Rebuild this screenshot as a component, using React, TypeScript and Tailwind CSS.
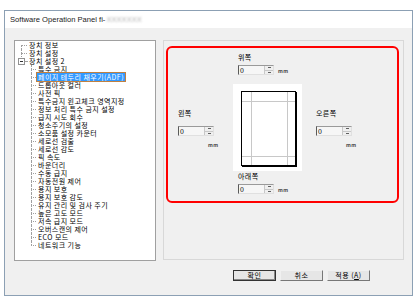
import React from "react";

const roots = ["장치 정보", "장치 설정", "장치 설정 2"];
const kids = [
  "특수 금지",
  "페이지 테두리 채우기(ADF)",
  "드롭아웃 컬러",
  "사전 픽",
  "특수금지 왼고체크 영역지정",
  "정보 처리 특수 금지 설정",
  "급지 시도 회수",
  "청소주기의 설정",
  "소모품 설정 카운터",
  "세로선 검출",
  "세로선 감도",
  "픽 속도",
  "바운더리",
  "수동 급지",
  "자동전원 제어",
  "용지 보호",
  "용지 보호 감도",
  "유지 관리 및 검사 주기",
  "높은 고도 모드",
  "저속 급지 모드",
  "오버스캔의 제어",
  "ECO 모드",
  "네트워크 기능",
];

const dot = "border-dotted border-[#a0a0a0]";

function Branch({ up, down, w }: { up: boolean; down: boolean; w: string }) {
  return (
    <div className={`flex h-full flex-col ${w}`}>
      <div className={`h-[4px] ${up ? `border-l ${dot}` : ""}`} />
      <div className={`h-[4px] border-t ${dot} ${down ? "border-l" : ""}`} />
    </div>
  );
}

function Tree() {
  return (
    <div className="h-[221px] w-[142px] border border-[#a0a0a0] bg-white pl-[6px] text-[7px] leading-[8px] tracking-[0.45px] text-black">
      {roots.map((r, i) => (
        <div key={r} className="flex h-[8px] items-center">
          {i < 2 ? (
            <Branch up={i > 0} down w="w-[6px]" />
          ) : (
            <div className="flex h-full w-[6px] items-center">
              <div className="-ml-[3px] flex h-[7px] w-[7px] shrink-0 items-center justify-center border border-[#919191] bg-white">
                <div className="h-px w-[3px] bg-[#333]" />
              </div>
              <div className={`h-0 flex-1 border-t ${dot}`} />
            </div>
          )}
          <span className="ml-[2px] inline-block h-[8px] whitespace-nowrap leading-[8px]">{r}</span>
        </div>
      ))}
      {kids.map((k, i) => (
        <div key={k} className="flex h-[8px] items-center">
          <div className="ml-[10px]" />
          <Branch up down={i < kids.length - 1} w="w-[5px]" />
          <span
            className={`ml-[1px] inline-block h-[8px] whitespace-nowrap px-[1px] leading-[8px] ${
              i === 1 ? "bg-[#3399ff] text-white outline outline-[#c08040]" : ""
            }`}
          >
            {k}
          </span>
        </div>
      ))}
    </div>
  );
}

function Spin() {
  return (
    <div className="flex h-[10px] w-[36px] border border-[#e0e0e0] border-l-[#5a5a5a] border-t-[#9a9a9a] bg-[#f6f6f6]">
      <span className="flex-1 pl-[1px] text-[7px] leading-[8px] text-black">0</span>
      <div className="flex w-[9px] flex-col border-l border-[#c8c8c8] bg-[#efefef]">
        <div className="flex flex-1 items-center justify-center border-b border-[#c8c8c8]">
          <div className="h-px w-[3px] bg-[#606060]" />
        </div>
        <div className="flex flex-1 items-center justify-center">
          <div className="h-px w-[3px] bg-[#606060]" />
        </div>
      </div>
    </div>
  );
}

function Mm({ cls = "" }: { cls?: string }) {
  return <span className={`text-[5px] font-bold leading-[5px] text-[#444] ${cls}`}>mm</span>;
}

function Page() {
  return (
    <div className="h-[87px] w-[69px] bg-white">
      <svg width="69" height="87" viewBox="0 0 69 87">
        <rect x="8.5" y="7.5" width="54" height="74" fill="#fff" stroke="#000" strokeWidth="1" />
        <line x1="63.5" y1="8" x2="63.5" y2="83" stroke="#000" strokeWidth="1" />
        <line x1="9" y1="82.5" x2="64" y2="82.5" stroke="#000" strokeWidth="1" />
        <line x1="18.5" y1="8" x2="18.5" y2="81" stroke="#c8c8c8" strokeWidth="1" />
        <line x1="54.5" y1="8" x2="54.5" y2="81" stroke="#c8c8c8" strokeWidth="1" />
        <line x1="9" y1="17.5" x2="62" y2="17.5" stroke="#c8c8c8" strokeWidth="1" />
        <line x1="9" y1="72.5" x2="62" y2="72.5" stroke="#c8c8c8" strokeWidth="1" />
      </svg>
    </div>
  );
}

function Btn({ label, main }: { label: React.ReactNode; main?: boolean }) {
  return (
    <div
      className={`flex h-[11px] w-[43px] items-center justify-center border bg-[#e6e6e6] text-[7px] leading-[7px] tracking-[0.5px] text-black ${
        main ? "border-[#333] shadow-[inset_-1px_-1px_0_#888]" : "border-[#f0f0f0] border-b-[#777] border-r-[#777]"
      }`}
    >
      {label}
    </div>
  );
}

export default function App() {
  return (
    <div className="h-[308px] w-[417px] bg-white pl-[4px] pt-[10px] font-['Noto_Sans_CJK_KR',sans-serif]">
      <div className="flex h-[286px] w-[409px] flex-col border border-[#8ca0b4]">
        <div className="flex h-[17px] items-center bg-white pl-[5px] font-['Liberation_Sans','Noto_Sans_CJK_KR',sans-serif] text-[7.6px] text-[#222]">
          <span>Software Operation Panel fi-</span>
          <span className="ml-[1px] text-[#b0b0b0] blur-[1.2px]">XXXXXXX</span>
        </div>
        <div className="flex-1 bg-[#f0f0f0] pl-[9px] pr-[8px] pt-[12px]">
          <div className="flex h-[221px] gap-[7px]">
            <Tree />
            <div className="h-[220px] w-[241px] border border-[#d8d8d8] pl-[2px] pt-[5px]">
              <div className="flex h-[157px] w-[233px] flex-col rounded-[6px] border-2 border-[#ff0000] text-[7px] leading-[9px] tracking-[0.4px] text-black">
                <div className="ml-[70px] pt-[5px]">
                  <div className="h-[9px]">위쪽</div>
                  <div className="mt-[3px] flex items-end gap-[4px]">
                    <Spin />
                    <Mm cls="mb-[2px]" />
                  </div>
                </div>
                <div className="mt-[9px] flex">
                  <div className="ml-[10px] w-[55px] pt-[25px]">
                    <div className="h-[9px]">왼쪽</div>
                    <div className="mt-[8px]">
                      <Spin />
                    </div>
                    <Mm cls="ml-[30px] mt-[6px] block" />
                  </div>
                  <Page />
                  <div className="ml-[14px] w-[55px] pt-[25px]">
                    <div className="h-[9px]">오른쪽</div>
                    <div className="mt-[8px]">
                      <Spin />
                    </div>
                    <Mm cls="ml-[30px] mt-[6px] block" />
                  </div>
                </div>
                <div className="ml-[70px] mt-[1px]">
                  <div className="h-[9px]">아래쪽</div>
                  <div className="mt-[3px] flex items-end gap-[4px]">
                    <Spin />
                    <Mm cls="mb-[2px]" />
                  </div>
                </div>
              </div>
            </div>
          </div>
          <div className="mr-[34px] mt-[9px] flex justify-end gap-[4px]">
            <Btn label="확인" main />
            <Btn label="취소" />
            <Btn
              label={
                <span>
                  적용 (<span className="underline">A</span>)
                </span>
              }
            />
          </div>
        </div>
      </div>
    </div>
  );
}
